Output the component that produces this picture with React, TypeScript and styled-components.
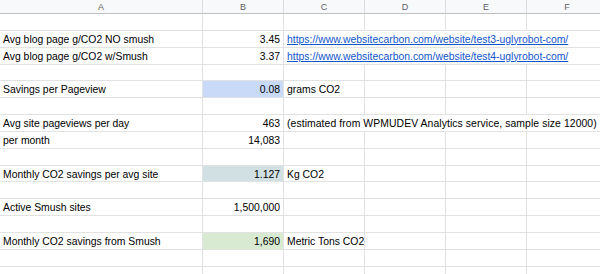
import React from "react";
import styled, { createGlobalStyle } from "styled-components";

const GlobalStyle = createGlobalStyle`
  html, body {
    margin: 0;
    padding: 0;
    background: #ffffff;
    overflow: hidden;
  }
`;

const Sheet = styled.div`
  display: grid;
  grid-template-columns: 203px 81px 81px 81px 81px 81px;
  grid-template-rows: 14px;
  grid-auto-rows: 16.85px;
  width: 608px;
  font-family: "Liberation Sans", Arial, sans-serif;
  font-size: 10.4px;
  color: #000000;
`;

const HeaderCell = styled.div`
  display: flex;
  align-items: center;
  justify-content: center;
  box-sizing: border-box;
  background: #f8f9fa;
  border-right: 1px solid #dadce0;
  border-bottom: 1px solid #c0c0c0;
  color: #5f6368;
  font-size: 9px;
`;

type Fill = "blue" | "teal" | "green";

const fills: Record<Fill, string> = {
  blue: "#c9daf8",
  teal: "#d0e0e3",
  green: "#d9ead3",
};

const Cell = styled.div<{ $right?: boolean; $fill?: Fill; $span?: number; $wide?: boolean }>`
  display: flex;
  align-items: center;
  justify-content: ${(p) => (p.$right ? "flex-end" : "flex-start")};
  box-sizing: border-box;
  padding: 1px 3px 0 3px;
  border-right: 1px solid #e2e2e2;
  border-bottom: 1px solid #e2e2e2;
  background: ${(p) => (p.$fill ? fills[p.$fill] : "#ffffff")};
  grid-column: span ${(p) => p.$span || 1};
  letter-spacing: ${(p) => (p.$wide ? "0.08px" : "normal")};
  white-space: nowrap;
  overflow: hidden;
`;

const Link = styled.a`
  color: #1155cc;
  text-decoration: underline;
`;

type Row = {
  label?: string;
  value?: string;
  fill?: Fill;
  note?: string;
  link?: boolean;
  span?: number;
};

const rows: Row[] = [
  {},
  {
    label: "Avg blog page g/CO2 NO smush",
    value: "3.45",
    note: "https://www.websitecarbon.com/website/test3-uglyrobot-com/",
    link: true,
    span: 4,
  },
  {
    label: "Avg blog page g/CO2 w/Smush",
    value: "3.37",
    note: "https://www.websitecarbon.com/website/test4-uglyrobot-com/",
    link: true,
    span: 4,
  },
  {},
  { label: "Savings per Pageview", value: "0.08", fill: "blue", note: "grams CO2" },
  {},
  {
    label: "Avg site pageviews per day",
    value: "463",
    note: "(estimated from WPMUDEV Analytics service, sample size 12000)",
    span: 4,
  },
  { label: "per month", value: "14,083" },
  {},
  { label: "Monthly CO2 savings per avg site", value: "1.127", fill: "teal", note: "Kg CO2" },
  {},
  { label: "Active Smush sites", value: "1,500,000" },
  {},
  { label: "Monthly CO2 savings from Smush", value: "1,690", fill: "green", note: "Metric Tons CO2" },
  {},
  {},
];

const columns = ["A", "B", "C", "D", "E", "F"];

const App: React.FunctionComponent = () => {
  return (
    <>
      <GlobalStyle />
      <Sheet>
        {columns.map((c) => (
          <HeaderCell key={c}>{c}</HeaderCell>
        ))}
        {rows.map((row, i) => {
          const span = row.span || 1;
          const rest = 4 - span;
          return (
            <React.Fragment key={i}>
              <Cell>{row.label}</Cell>
              <Cell $right $fill={row.fill}>
                {row.value}
              </Cell>
              <Cell $span={span} $wide={span > 1 && !row.link}>
                {row.link ? <Link href="#">{row.note}</Link> : row.note}
              </Cell>
              {Array.from({ length: rest }).map((_, j) => (
                <Cell key={j} />
              ))}
            </React.Fragment>
          );
        })}
      </Sheet>
    </>
  );
};

export default App;
